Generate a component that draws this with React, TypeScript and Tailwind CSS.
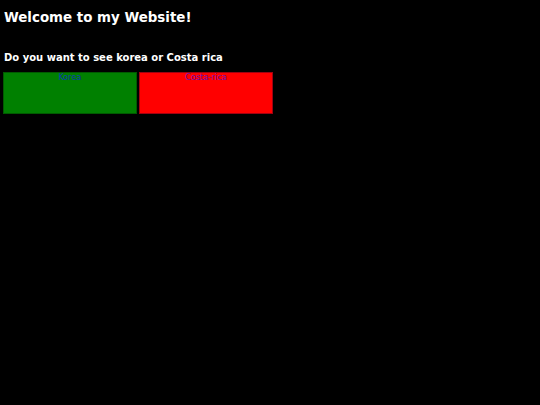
import React from "react";

export default function App() {
  return (
    <div
      className="min-h-screen w-full bg-black text-white"
      style={{ fontFamily: '"DejaVu Sans", Verdana, sans-serif' }}
    >
      <div className="flex flex-col pl-[3px] pt-[10px]">
        <h1 className="pl-[1px] text-[13.4px] font-bold leading-[16px]">Welcome to my Website!</h1>
        <h2 className="mt-[26px] pl-[1px] text-[10px] font-bold leading-[12px]">
          Do you want to see korea or Costa rica
        </h2>
        <div className="mt-[8px] flex gap-[2px]">
          <div className="flex h-[42px] w-[134px] justify-center border border-[#005a00] bg-[#008000]">
            <a href="#" className="text-[8.2px] leading-[8px] text-[#0b3ab0]">
              Korea
            </a>
          </div>
          <div className="flex h-[42px] w-[134px] justify-center border border-[#a00010] bg-[#ff0000]">
            <a href="#" className="text-[8.2px] leading-[8px] text-[#6a14b0]">
              Costa-rica
            </a>
          </div>
        </div>
      </div>
    </div>
  );
}
